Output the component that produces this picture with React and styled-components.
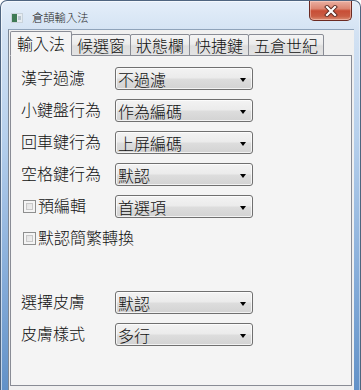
import React, { useState } from 'react';
import styled, { createGlobalStyle } from 'styled-components';

const GlobalStyle = createGlobalStyle`
  html, body {
    margin: 0;
    padding: 0;
    overflow: hidden;
    background: #ffffff;
  }
  * {
    box-sizing: border-box;
  }
`;

const cjk = '"Noto Sans CJK TC", "Noto Sans CJK SC", sans-serif';

const tabs = ['輸入法', '候選窗', '狀態欄', '快捷鍵', '五倉世紀'];

const rows = [
  { label: '漢字過濾', value: '不過濾' },
  { label: '小鍵盤行為', value: '作為編碼' },
  { label: '回車鍵行為', value: '上屏編碼' },
  { label: '空格鍵行為', value: '默認' },
  { label: '預編輯', value: '首選項', check: true },
  { label: '默認簡繁轉換', check: true },
  { spacer: true },
  { label: '選擇皮膚', value: '默認' },
  { label: '皮膚樣式', value: '多行' },
];

const Window = styled.div`
  width: 361px;
  height: 400px;
  border: 1px solid #4f6580;
  border-bottom: none;
  border-radius: 7px 7px 0 0;
  padding: 0 6px 0 7px;
  display: flex;
  flex-direction: column;
  background: linear-gradient(180deg, #e4eef9 0%, #d3e2f3 8%, #b5cfec 35%, #85acd9 70%, #5f8fc6 100%);
  box-shadow: inset 1px 1px 0 rgba(255, 255, 255, 0.6), inset -1px 0 0 rgba(255, 255, 255, 0.4);
`;

const TitleBar = styled.div`
  height: 28px;
  display: flex;
  align-items: flex-start;
`;

const TitleIcon = styled.svg`
  margin: 12px 0 0 3px;
  flex-shrink: 0;
`;

const TitleText = styled.div`
  margin: 9px 0 0 9px;
  font-family: ${cjk};
  font-size: 11.3px;
  font-weight: 300;
  line-height: 14px;
  color: #1e1e1e;
`;

const CloseButton = styled.button`
  margin: 0 2px 0 auto;
  width: 43px;
  height: 20px;
  padding: 0;
  display: flex;
  align-items: center;
  justify-content: center;
  border: 1px solid #6b2a22;
  border-top: none;
  border-radius: 0 0 5px 5px;
  background: linear-gradient(180deg, #eab0a2 0%, #dc8672 40%, #c84e36 52%, #c95d44 80%, #dc8e74 100%);
  box-shadow: inset 0 0 0 1px rgba(255, 220, 210, 0.45);
  cursor: pointer;
`;

const Client = styled.div`
  flex: 1;
  background: #f0f0f0;
  border-left: 1px solid #7c8795;
  border-top: 1px solid #8fa3ba;
  padding: 1px 2px 0 1px;
  display: flex;
  flex-direction: column;
`;

const TabStrip = styled.div`
  display: flex;
  align-items: flex-end;
  height: 25px;
  margin-bottom: -1px;
  position: relative;
  z-index: 1;
`;

const Tab = styled.div`
  height: ${p => (p.$active ? 25 : 22)}px;
  padding: ${p => (p.$active ? '1px 6px 0' : '1px 5px 0')};
  margin-left: ${p => (p.$first ? 0 : -1)}px;
  border: 1px solid #898c95;
  border-bottom-color: ${p => (p.$active ? '#f4f4f4' : '#898c95')};
  border-radius: 2px 2px 0 0;
  background: ${p => (p.$active
    ? '#f4f4f4'
    : 'linear-gradient(180deg, #f4f4f4 0%, #ececec 45%, #dedede 55%, #e3e3e3 100%)')};
  position: relative;
  z-index: ${p => (p.$active ? 2 : 1)};
  font-family: ${cjk};
  font-size: 16px;
  font-weight: 300;
  line-height: ${p => (p.$active ? 21 : 19)}px;
  color: #111;
  white-space: nowrap;
  cursor: default;
`;

const Panel = styled.div`
  height: 331px;
  border: 1px solid #898c95;
  background: #f4f4f4;
  padding: 11px 0 0 10px;
  display: flex;
  flex-direction: column;
  gap: 9px;
`;

const Row = styled.div`
  height: 23px;
  display: flex;
  align-items: center;
`;

const Label = styled.label`
  width: 94px;
  flex-shrink: 0;
  display: flex;
  align-items: center;
  gap: 2px;
  font-family: ${cjk};
  font-size: 16px;
  font-weight: 300;
  line-height: 20px;
  color: #111;
  white-space: nowrap;
  padding-bottom: 3px;
`;

const Check = styled.span`
  width: 13px;
  height: 13px;
  margin-left: 2px;
  flex-shrink: 0;
  border: 1px solid #8e8f8f;
  background: linear-gradient(135deg, #dcdcdc 0%, #f6f6f6 100%);
  box-shadow: inset 0 0 0 2px #f4f4f4, inset 0 0 0 3px #c8c8c8;
  margin-top: 3px;
`;

const Select = styled.div`
  width: 138px;
  height: 23px;
  display: flex;
  align-items: center;
  justify-content: space-between;
  padding: 1px 6px 0 2px;
  border: 1px solid #707070;
  border-radius: 3px;
  background: linear-gradient(180deg, #f3f3f3 0%, #ebebeb 48%, #dddddd 52%, #d3d3d3 100%);
  box-shadow: inset 0 0 0 1px rgba(255, 255, 255, 0.7);
  font-family: ${cjk};
  font-size: 16px;
  font-weight: 300;
  line-height: 20px;
  color: #111;
  cursor: default;
`;

const Arrow = styled.span`
  width: 0;
  height: 0;
  border-left: 3.5px solid transparent;
  border-right: 3.5px solid transparent;
  border-top: 4px solid #000;
  margin-top: 1px;
`;

function AppIcon() {
  return (
    <TitleIcon width="12" height="10" viewBox="0 0 12 10">
      <rect x="0" y="0" width="12" height="10" fill="#c9d3db" />
      <rect x="1" y="1" width="5" height="8" fill="#3f7a55" />
      <rect x="6" y="1" width="5" height="8" fill="#e6ecf1" />
      <rect x="7" y="3" width="3" height="4" fill="#b9c6d0" />
    </TitleIcon>
  );
}

function CloseGlyph() {
  return (
    <svg width="14" height="12" viewBox="0 0 14 12">
      <path d="M3 2 L11 10 M11 2 L3 10" stroke="#5a2a22" strokeWidth="4" strokeLinecap="square" />
      <path d="M3 2 L11 10 M11 2 L3 10" stroke="#ffffff" strokeWidth="2.2" strokeLinecap="square" />
    </svg>
  );
}

export default function App() {
  const [active, setActive] = useState(0);

  return (
    <>
      <GlobalStyle />
      <Window>
        <TitleBar>
          <AppIcon />
          <TitleText>倉頡輸入法</TitleText>
          <CloseButton aria-label="Close"><CloseGlyph /></CloseButton>
        </TitleBar>
        <Client>
          <TabStrip>
            {tabs.map((t, i) => (
              <Tab key={t} $active={i === active} $first={i === 0} onClick={() => setActive(i)}>
                {t}
              </Tab>
            ))}
          </TabStrip>
          <Panel>
            {rows.map((r, i) => (
              <Row key={i}>
                {!r.spacer && (
                  <Label>
                    {r.check && <Check />}
                    {r.label}
                  </Label>
                )}
                {r.value && (
                  <Select>
                    {r.value}
                    <Arrow />
                  </Select>
                )}
              </Row>
            ))}
          </Panel>
        </Client>
      </Window>
    </>
  );
}
